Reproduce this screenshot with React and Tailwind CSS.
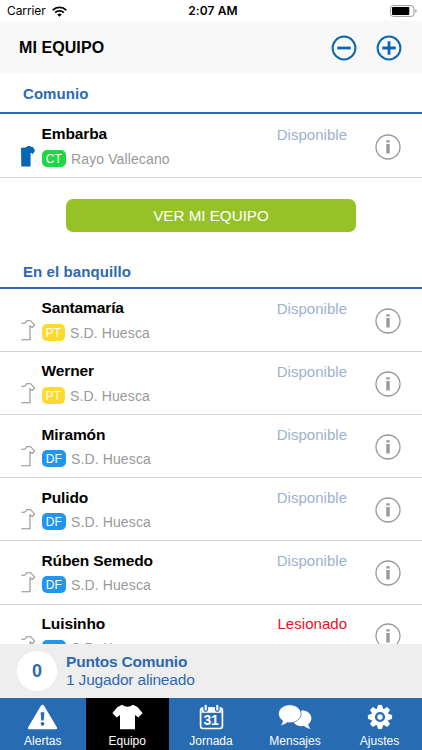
const bench = [
  { name: 'Santamaría', pos: 'PT', team: 'S.D. Huesca', status: 'Disponible' },
  { name: 'Werner', pos: 'PT', team: 'S.D. Huesca', status: 'Disponible' },
  { name: 'Miramón', pos: 'DF', team: 'S.D. Huesca', status: 'Disponible' },
  { name: 'Pulido', pos: 'DF', team: 'S.D. Huesca', status: 'Disponible' },
  { name: 'Rúben Semedo', pos: 'DF', team: 'S.D. Huesca', status: 'Disponible' },
  { name: 'Luisinho', pos: 'DF', team: 'S.D. Huesca', status: 'Lesionado' },
];

const posColors = {
  CT: 'w-[24.5px] bg-[#1fd744]',
  PT: 'w-[23.5px] bg-[#ffd92f]',
  DF: 'w-[24.5px] bg-[#2196ef]',
};

function StatusBar() {
  return (
    <div className="flex h-[21px] shrink-0 items-center bg-white pl-[7px] pr-1 pt-px font-['Inter',sans-serif] text-[12px] text-black">
      <div className="flex flex-1 items-center gap-[6px]">
        <span className="tracking-[-0.1px]">Carrier</span>
        <svg width="15" height="11" viewBox="0 0 15 11" fill="none" stroke="#000" strokeWidth="1.9">
          <path d="M0.8 4.1a9.6 9.6 0 0 1 13.4 0" />
          <path d="M3.2 6.6a6.2 6.2 0 0 1 8.6 0" />
          <path d="M7.5 10.8 5.2 8.5a3.3 3.3 0 0 1 4.6 0z" fill="#000" stroke="none" />
        </svg>
      </div>
      <span className="pl-px font-semibold tracking-[0.1px]">2:07 AM</span>
      <div className="flex flex-1 justify-end pb-px">
        <svg width="28" height="12" viewBox="0 0 28 12">
          <rect x="0.6" y="0.6" width="23.3" height="10.8" rx="2.6" fill="none" stroke="#999" />
          <rect x="2" y="2" width="17.3" height="8" rx="1" />
          <path d="M25.3 4v4q1.4-.6 1.4-2t-1.4-2z" fill="#999" />
        </svg>
      </div>
    </div>
  );
}

function Shirt({ filled }) {
  if (filled) {
    return (
      <svg width="15" height="21" viewBox="0 0 15 21" fill="#0867b2">
        <path d="M0 1.8 4.8 1.4Q5.5 .2 7.3 0T9.9.7L11.9 1.1 14 4.6 12 8l-2.4-1.2V20.6H.3z" />
      </svg>
    );
  }
  return (
    <svg width="15" height="21" viewBox="0 0 15 21" fill="none" stroke="#8f8f8f" strokeWidth="1.1">
      <path d="M.3 3.2H3.4Q5 2.8 5.6.7L9.6.7 13.6 4.9 11.2 7.6 9 5.9V19.7H.3" />
    </svg>
  );
}

function Info() {
  return (
    <svg width="26" height="26" viewBox="0 0 26 26">
      <circle cx="13" cy="13" r="12" fill="none" stroke="#999" strokeWidth="1.3" />
      <path d="M11.3 6.3h3.4v2.2h-3.4zM11.3 9.9h3.4v9.6h-3.4z" fill="#999" />
    </svg>
  );
}

function PlayerRow({ player, filled }) {
  return (
    <div className="flex h-[63.1px] shrink-0 border-b border-[#d4d4d4] pl-[21px] pr-[21px]">
      <div className="w-[20.5px] shrink-0 pt-[31px]">
        <Shirt filled={filled} />
      </div>
      <div className="flex-1">
        <div className="mt-[9px] flex h-[20px] items-center justify-between pr-[28px]">
          <span className="text-[15.5px] font-bold tracking-[-0.12px] text-black">{player.name}</span>
          <span
            className={`text-[15px] tracking-[0.03px] ${player.status === 'Lesionado' ? 'text-[#e8121c]' : 'text-[#9db1d0]'}`}
          >
            {player.status}
          </span>
        </div>
        <div className="mt-[6px] flex h-[17px] items-center gap-[5px]">
          <span className={`flex h-[17px] items-center justify-center rounded-[5px] pt-px text-[12px] text-white ${posColors[player.pos]}`}>
            {player.pos}
          </span>
          <span className="text-[14px] tracking-[0.12px] text-[#999]">{player.team}</span>
        </div>
      </div>
      <div className="w-[26px] shrink-0 pt-[18.5px]">
        <Info />
      </div>
    </div>
  );
}

function AlertIcon() {
  return (
    <svg width="31" height="26" viewBox="0 0 31 26">
      <path d="M15.5.8q1 0 1.6 1L30 23.4q.8 1.8-1 1.8H2q-1.8 0-1-1.8L13.9 1.8q.6-1 1.6-1z" fill="#fff" />
      <path d="M13.6 8.2h3.8l-.7 8.4h-2.4z" fill="#276bb3" />
      <circle cx="15.5" cy="19.8" r="1.9" fill="#276bb3" />
    </svg>
  );
}

function ShirtIcon() {
  return (
    <svg width="31" height="26" viewBox="0 0 31 26">
      <path d="M10 .8q5.5 4 11 0l4.4 2.2 5.2 6-4.3 4.4-3.3-2.3v14.1H8V11.1l-3.3 2.3L.4 9l5.2-6z" fill="#fff" />
    </svg>
  );
}

function CalendarIcon() {
  return (
    <div className="relative h-[26px] w-[25px]">
      <svg width="25" height="26" viewBox="0 0 25 26">
        <rect x="1.6" y="4.2" width="21.8" height="20.3" rx="2.4" fill="none" stroke="#fff" strokeWidth="1.7" />
        <path d="M2.6 3.4h19.8v5.4H2.6z" fill="#fff" />
        <path d="M6.7 1.8v3.8M18.3 1.8v3.8" stroke="#276bb3" strokeWidth="4.8" strokeLinecap="round" />
        <path d="M6.7 1.8v3.8M18.3 1.8v3.8" stroke="#fff" strokeWidth="2.2" strokeLinecap="round" />
      </svg>
      <span className="absolute inset-x-0 top-[9px] text-center text-[14px] leading-[15px] font-bold tracking-[-0.3px]">31</span>
    </div>
  );
}

function ChatIcon() {
  return (
    <svg width="34" height="26" viewBox="0 0 34 26" fill="#fff">
      <path d="M24 6.2c5.4.4 9.4 3.7 9.4 8 0 2.4-1.2 4.5-3.1 5.9.2 1.9.8 3.2 2.3 4.7-2.7-.2-4.9-1.2-6.6-2.7-4.4.6-8.8-.9-10.9-4.1z" />
      <path d="M11.8.8c6.2 0 11.3 4 11.3 9s-5.1 9-11.3 9q-1.4 0-2.7-.2c-1.9 1.8-4.2 2.8-7 3 1.5-1.4 2.3-2.9 2.5-4.9C2.1 15.1.5 12.6.5 9.8c0-5 5.1-9 11.3-9z" stroke="#276bb3" strokeWidth=".7" />
    </svg>
  );
}

function GearIcon() {
  const teeth = [0, 45, 90, 135, 180, 225, 270, 315];
  return (
    <svg width="26" height="26" viewBox="0 0 26 26">
      {teeth.map((a) => (
        <path key={a} d="M10.5 5 11.3 1.4h3.4L15.5 5z" fill="#fff" stroke="#fff" strokeLinejoin="round" transform={`rotate(${a} 13 13)`} />
      ))}
      <circle cx="13" cy="13" r="9" fill="#fff" />
      <circle cx="13" cy="13" r="3.9" fill="none" stroke="#276bb3" strokeWidth="2.4" />
    </svg>
  );
}

const tabs = [
  { label: 'Alertas', Icon: AlertIcon },
  { label: 'Equipo', Icon: ShirtIcon, active: true },
  { label: 'Jornada', Icon: CalendarIcon },
  { label: 'Mensajes', Icon: ChatIcon },
  { label: 'Ajustes', Icon: GearIcon },
];

export default function App() {
  return (
    <div className="flex h-[750px] w-[422px] flex-col overflow-hidden bg-white font-['Liberation_Sans',Arial,sans-serif] leading-none">
      <StatusBar />
      <header className="flex h-[52px] shrink-0 items-center justify-between bg-[#f8f8f8] pl-[19px] pr-5">
        <h1 className="pt-[2px] text-[16px] font-bold tracking-[0.08px] text-black">MI EQUIPO</h1>
        <div className="flex gap-[19px] pt-[2px]">
          <svg width="26" height="26" viewBox="0 0 26 26" fill="none" stroke="#0c66b3">
            <circle cx="13" cy="13" r="11.4" strokeWidth="2" />
            <path d="M6.3 13h13.4" strokeWidth="2.8" />
          </svg>
          <svg width="26" height="26" viewBox="0 0 26 26" fill="none" stroke="#0c66b3">
            <circle cx="13" cy="13" r="11.4" strokeWidth="2" />
            <path d="M6.3 13h13.4M13 6.3v13.4" strokeWidth="2.8" />
          </svg>
        </div>
      </header>

      <main className="flex min-h-0 flex-1 flex-col overflow-hidden">
        <h2 className="flex h-[41px] shrink-0 items-center border-b-2 border-[#2e69ae] pl-[23px] pt-px text-[15px] font-bold tracking-[0.06px] text-[#2e69ae]">
          Comunio
        </h2>
        <div className="shrink-0 pt-px">
          <PlayerRow player={{ name: 'Embarba', pos: 'CT', team: 'Rayo Vallecano', status: 'Disponible' }} filled />
        </div>
        <div className="shrink-0 px-[66px] pt-[21px]">
          <button className="h-[33px] w-full rounded-[7px] bg-[#97c227] pt-px text-[15.2px] text-white">VER MI EQUIPO</button>
        </div>
        <h2 className="mt-[23px] flex h-[34px] shrink-0 items-center border-b-2 border-[#2e69ae] pl-[23px] text-[15px] font-bold tracking-[0.08px] text-[#2e69ae]">
          En el banquillo
        </h2>
        {bench.map((p) => (
          <PlayerRow key={p.name} player={p} />
        ))}
      </main>

      <div className="flex h-[54px] shrink-0 items-center gap-[9px] bg-[#eee] pl-[17px] text-[#2e69ae]">
        <div className="flex size-[40px] items-center justify-center rounded-full bg-white text-[18px] font-bold">0</div>
        <div className="flex flex-col gap-[3px]">
          <span className="text-[15.5px] font-bold tracking-[-0.2px]">Puntos Comunio</span>
          <span className="text-[15.5px] tracking-[-0.18px]">1 Jugador alineado</span>
        </div>
      </div>

      <nav className="grid h-[52.5px] shrink-0 grid-cols-[85.5px_83.5px_84px_84px_85px] bg-[#276bb3] text-white">
        {tabs.map(({ label, Icon, active }) => (
          <div key={label} className={`flex flex-col items-center pt-[6px] ${active ? 'bg-black' : ''}`}>
            <Icon />
            <span className="mt-[5px] text-[12px]">{label}</span>
          </div>
        ))}
      </nav>
    </div>
  );
}
